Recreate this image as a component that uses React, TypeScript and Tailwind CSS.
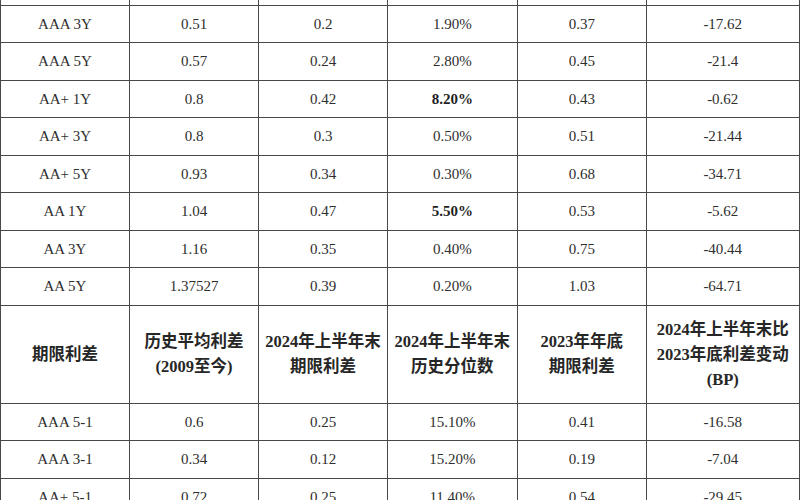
const serif = "font-['Liberation_Serif','Noto_Sans_CJK_SC',serif]";

type Row = { cells: string[]; bold?: number[] };

const topRows: Row[] = [
  { cells: ["", "", "", "", "", ""] },
  { cells: ["AAA 3Y", "0.51", "0.2", "1.90%", "0.37", "-17.62"] },
  { cells: ["AAA 5Y", "0.57", "0.24", "2.80%", "0.45", "-21.4"] },
  { cells: ["AA+ 1Y", "0.8", "0.42", "8.20%", "0.43", "-0.62"], bold: [3] },
  { cells: ["AA+ 3Y", "0.8", "0.3", "0.50%", "0.51", "-21.44"] },
  { cells: ["AA+ 5Y", "0.93", "0.34", "0.30%", "0.68", "-34.71"] },
  { cells: ["AA 1Y", "1.04", "0.47", "5.50%", "0.53", "-5.62"], bold: [3] },
  { cells: ["AA 3Y", "1.16", "0.35", "0.40%", "0.75", "-40.44"] },
  { cells: ["AA 5Y", "1.37527", "0.39", "0.20%", "1.03", "-64.71"] },
];

const header: string[][] = [
  ["期限利差"],
  ["历史平均利差", "(2009至今)"],
  ["2024年上半年末", "期限利差"],
  ["2024年上半年末", "历史分位数"],
  ["2023年年底", "期限利差"],
  ["2024年上半年末比", "2023年底利差变动", "(BP)"],
];

const bottomRows: Row[] = [
  { cells: ["AAA 5-1", "0.6", "0.25", "15.10%", "0.41", "-16.58"] },
  { cells: ["AAA 3-1", "0.34", "0.12", "15.20%", "0.19", "-7.04"] },
  { cells: ["AA+ 5-1", "0.72", "0.25", "11.40%", "0.54", "-29.45"] },
];

function DataRow({ row }: { row: Row }) {
  return (
    <>
      {row.cells.map((c, i) => (
        <div
          key={i}
          className={`h-[37.5px] flex items-center justify-center border-r-[1.5px] border-b-[1.5px] border-[#474747] text-[15px] ${
            row.bold?.includes(i) ? "font-bold text-[#1f1f1f]" : "text-[#2e2e2e]"
          }`}
        >
          {c}
        </div>
      ))}
    </>
  );
}

export default function App() {
  return (
    <div className={`w-[800px] h-[500px] overflow-hidden bg-white ${serif}`}>
      <div className="mt-[-31.75px] w-[799.5px] grid grid-cols-[129px_129px_129px_129.5px_129.5px_1fr] border-l-[1.5px] border-[#474747]">
        {topRows.map((r, i) => (
          <DataRow key={i} row={r} />
        ))}
        {header.map((lines, i) => (
          <div
            key={i}
            className="h-[98px] flex flex-col items-center justify-center border-r-[1.5px] border-b-[1.5px] border-[#474747] text-[16.5px] leading-[25px] font-bold text-[#262626] text-center"
          >
            {lines.map((l, j) => (
              <span key={j}>{l}</span>
            ))}
          </div>
        ))}
        {bottomRows.map((r, i) => (
          <DataRow key={i} row={r} />
        ))}
      </div>
    </div>
  );
}
